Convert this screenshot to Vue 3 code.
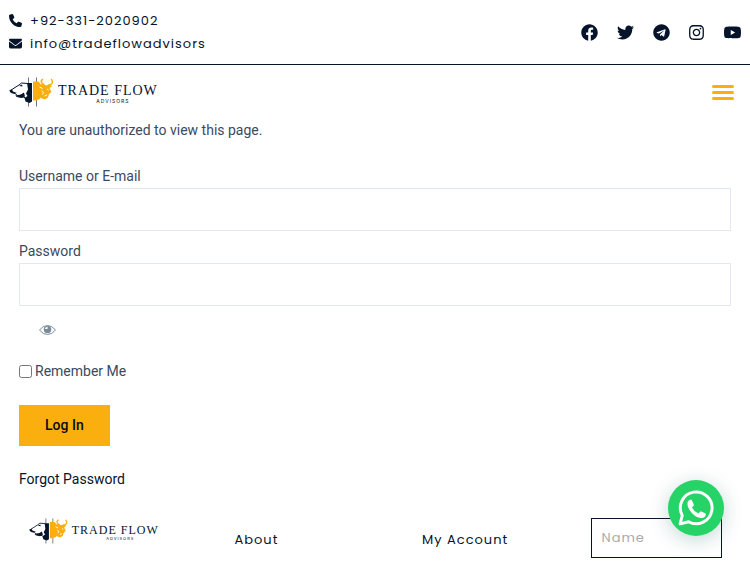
<template>
  <div class="page">
    <!-- shared logo drawing -->
    <svg class="sprite" aria-hidden="true">
      <symbol id="brand-mark" viewBox="0 0 90 60">
        <path d="M39 1v58M55 1v58" stroke="#6a7482" stroke-width="2" />
        <path d="M36 12h10v37l-5 3-8-3-2-7 6-4-3-5 4-8z" fill="#06142b" />
        <path d="M37 13l-12-1-5 4-8 5-9 6 1 4 8 2 5 4 10-1M14 38l5 2 11 0 4 4" fill="none" stroke="#06142b" stroke-width="2" stroke-linejoin="round" />
        <path d="M1 26l5-1 2 4 8 3-6 1-8-3zM20 18l6-3 1 4zM12 37l10-1 8-5 2 8-7 3z" fill="#06142b" />
        <path d="M48 9h11l4 5v29l-8 4h-7z" fill="#fbaf0f" />
        <path d="M62 15l6-1 6 3 6-2 6 3-5 4 4 8-5 4-2 7-6 4-8-3-6-6z" fill="#fbaf0f" />
        <path d="M70 15c-5-2-8-7-3-10M80 16c7-1 9-6 5-11" fill="none" stroke="#fbaf0f" stroke-width="3" stroke-linecap="round" />
        <path d="M61 20l6 3M65 28l4 3-2 4M76 24l3 2M71 38l5-2" fill="none" stroke="#fff" stroke-width="2" />
      </symbol>
    </svg>

    <div class="top-bar">
      <ul class="contact-list">
        <li v-for="item in contacts" :key="item.text">
          <a :href="item.href">
            <svg class="contact-icon" viewBox="0 0 512 512"><path :d="item.icon" /></svg>
            <span>{{ item.text }}</span>
          </a>
        </li>
      </ul>
      <div class="social-list">
        <a v-for="item in socials" :key="item.name" href="#" :aria-label="item.name">
          <svg :viewBox="item.box"><path :d="item.icon" /></svg>
        </a>
      </div>
    </div>

    <header class="site-header">
      <a href="#" class="brand">
        <svg class="brand-mark"><use href="#brand-mark" /></svg>
        <span class="brand-text">
          <span class="brand-name">TRADE FLOW</span>
          <span class="brand-sub">ADVISORS</span>
        </span>
      </a>
      <button type="button" class="menu-btn" aria-label="Menu" @click="menuOpen = !menuOpen">
        <span></span>
        <span></span>
        <span></span>
      </button>
    </header>

    <main class="content">
      <p class="notice">You are unauthorized to view this page.</p>
      <form class="login-form" @submit.prevent>
        <div class="field">
          <label for="user-login">Username or E-mail</label>
          <input id="user-login" v-model="form.username" type="text" />
        </div>
        <div class="field">
          <label for="user-pass">Password</label>
          <input id="user-pass" v-model="form.password" :type="showPassword ? 'text' : 'password'" />
        </div>
        <button type="button" class="eye-btn" aria-label="Show password" @click="showPassword = !showPassword">
          <svg viewBox="0 0 34 22">
            <path d="M1 11Q8 2 17 2t16 9q-7 9-16 9T1 11z" fill="none" stroke="#7b8f9e" stroke-width="2" />
            <circle cx="17" cy="10" r="7.5" fill="#7b8c99" />
            <path d="M17 4v5h-5q0-4 5-5z" fill="#fff" />
          </svg>
        </button>
        <div class="remember">
          <input id="remember" v-model="form.remember" type="checkbox" />
          <label for="remember">Remember Me</label>
        </div>
        <button type="submit" class="login-btn">Log In</button>
      </form>
      <a href="#" class="forgot">Forgot Password</a>
    </main>

    <footer class="site-footer">
      <a href="#" class="brand brand-small">
        <svg class="brand-mark"><use href="#brand-mark" /></svg>
        <span class="brand-text">
          <span class="brand-name">TRADE FLOW</span>
          <span class="brand-sub">ADVISORS</span>
        </span>
      </a>
      <a href="#" class="footer-link">About</a>
      <a href="#" class="footer-link">My Account</a>
      <div class="footer-form">
        <input v-model="form.name" type="text" placeholder="Name" aria-label="Name" />
      </div>
    </footer>

    <button type="button" class="chat-btn" aria-label="WhatsApp">
      <svg viewBox="0 0 34 34">
        <path d="M2 32l2-8a15 15 0 1 1 6 6z" fill="none" stroke="#fff" stroke-width="2.8" stroke-linejoin="round" />
        <path d="M9.5 10.5l2.2-1.3q1-.4 1.5.6l1.7 4q.3.8-.4 1.4l-1.3 1.3q2 4 6 5.7l1.5-1.6q.6-.6 1.4-.3l3.6 1.7q.9.5.6 1.4-.9 3.3-4.6 3-4.900-.6-8.800-5-4.200-4.800-3.900-8.700 0-1.400.5-2.200z" fill="#fff" />
      </svg>
    </button>
  </div>
</template>

<script setup>
import { reactive, ref } from 'vue';

const menuOpen = ref(false);
const showPassword = ref(false);
const form = reactive({ username: '', password: '', remember: false, name: '' });

const contacts = [
  {
    text: '+92-331-2020902',
    href: 'tel:+923312020902',
    icon: 'M164.900 24.600c-7.700-18.600-28-28.500-47.400-23.200l-88 24C12.100 30.200 0 46 0 64c0 247.400 200.600 448 448 448 18 0 33.800-12.100 38.600-29.500l24-88c5.300-19.400-4.600-39.700-23.200-47.400l-96-40c-16.300-6.800-35.200-2.100-46.300 11.600L304.700 368C234.300 334.700 177.300 277.700 144 207.300L193.300 167c13.700-11.200 18.400-30 11.600-46.300l-40-96z',
  },
  {
    text: 'info@tradeflowadvisors',
    href: 'mailto:info@tradeflowadvisors',
    icon: 'M48 64C21.500 64 0 85.500 0 112c0 15.100 7.100 29.300 19.200 38.400L236.800 313.600c11.400 8.500 27 8.500 38.400 0L492.800 150.400c12.100-9.100 19.200-23.300 19.200-38.400 0-26.500-21.500-48-48-48H48zM0 176v208c0 35.300 28.700 64 64 64h384c35.300 0 64-28.700 64-64V176L294.400 339.200c-22.800 17.100-54 17.100-76.800 0L0 176z',
  },
];

const socials = [
  {
    name: 'Facebook',
    box: '0 0 512 512',
    icon: 'M504 256C504 119 393 8 256 8S8 119 8 256c0 123.780 90.690 226.380 209.250 245V327.690h-63V256h63v-54.640c0-62.150 37-96.480 93.670-96.480 27.140 0 55.520 4.840 55.520 4.840v61h-31.280c-30.800 0-40.410 19.120-40.410 38.730V256h68.780l-11 71.690h-57.780V501C413.310 482.380 504 379.780 504 256z',
  },
  {
    name: 'Twitter',
    box: '0 0 512 512',
    icon: 'M459.370 151.716c.325 4.548.325 9.097.325 13.645 0 138.720-105.583 298.558-298.558 298.558-59.452 0-114.680-17.219-161.137-47.106 8.447.974 16.568 1.299 25.340 1.299 49.055 0 94.213-16.568 130.274-44.832-46.132-.975-84.792-31.188-98.112-72.772 6.498.974 12.995 1.624 19.818 1.624 9.421 0 18.843-1.300 27.614-3.573-48.081-9.747-84.143-51.980-84.143-102.985v-1.299c13.969 7.797 30.214 12.670 47.431 13.319-28.264-18.843-46.781-51.005-46.781-87.391 0-19.492 5.197-37.360 14.294-52.954 51.655 63.675 129.300 105.258 216.365 109.807-1.624-7.797-2.599-15.918-2.599-24.040 0-57.828 46.782-104.934 104.934-104.934 30.213 0 57.502 12.670 76.670 33.137 23.715-4.548 46.456-13.320 66.599-25.340-7.798 24.366-24.366 44.833-46.132 57.827 21.117-2.273 41.584-8.122 60.426-16.243-14.292 20.791-32.161 39.308-52.628 54.253z',
  },
  {
    name: 'Telegram',
    box: '0 0 496 512',
    icon: 'M248 8C111 8 0 119 0 256s111 248 248 248 248-111 248-248S385 8 248 8zm121.800 169.900l-40.700 191.800c-3 13.600-11.100 16.900-22.400 10.500l-62-45.700-29.900 28.800c-3.300 3.300-6.100 6.100-12.500 6.100l4.400-63.100 114.900-103.800c5-4.400-1.100-6.900-7.700-2.500l-142 89.400-61.200-19.100c-13.300-4.200-13.600-13.300 2.800-19.700l239.100-92.200c11.100-4 20.800 2.700 17.200 19.500z',
  },
  {
    name: 'Instagram',
    box: '0 0 448 512',
    icon: 'M224.100 141c-63.600 0-114.900 51.300-114.900 114.900s51.300 114.900 114.900 114.900S339 319.500 339 255.900 287.700 141 224.100 141zm0 189.600c-41.100 0-74.700-33.500-74.700-74.700s33.500-74.700 74.700-74.700 74.700 33.500 74.700 74.700-33.600 74.700-74.700 74.700zm146.400-194.300c0 14.900-12 26.800-26.800 26.800-14.900 0-26.800-12-26.800-26.800s12-26.800 26.800-26.800 26.800 12 26.800 26.800zm76.100 27.200c-1.700-35.900-9.900-67.700-36.200-93.900-26.200-26.200-58-34.400-93.900-36.200-37-2.100-147.900-2.100-184.900 0-35.800 1.700-67.600 9.900-93.900 36.100s-34.400 58-36.200 93.900c-2.100 37-2.100 147.900 0 184.900 1.700 35.900 9.900 67.700 36.200 93.900s58 34.400 93.900 36.200c37 2.100 147.900 2.100 184.900 0 35.900-1.700 67.700-9.900 93.900-36.200 26.200-26.200 34.400-58 36.200-93.900 2.100-37 2.100-147.800 0-184.800zM398.800 388c-7.800 19.600-22.900 34.700-42.600 42.600-29.500 11.700-99.500 9-132.100 9s-102.700 2.600-132.100-9c-19.600-7.800-34.700-22.900-42.600-42.600-11.700-29.500-9-99.500-9-132.100s-2.600-102.700 9-132.100c7.800-19.600 22.900-34.700 42.600-42.600 29.500-11.700 99.500-9 132.100-9s102.700-2.600 132.100 9c19.600 7.800 34.700 22.900 42.600 42.600 11.700 29.500 9 99.500 9 132.100s2.700 102.700-9 132.100z',
  },
  {
    name: 'Youtube',
    box: '14 0 548 512',
    icon: 'M549.655 124.083c-6.281-23.650-24.787-42.276-48.284-48.597C458.781 64 288 64 288 64S117.220 64 74.629 75.486c-23.497 6.322-42.003 24.947-48.284 48.597-11.412 42.867-11.412 132.305-11.412 132.305s0 89.438 11.412 132.305c6.281 23.650 24.787 41.500 48.284 47.821C117.220 448 288 448 288 448s170.780 0 213.371-11.486c23.497-6.321 42.003-24.171 48.284-47.821 11.412-42.867 11.412-132.305 11.412-132.305s0-89.438-11.412-132.305zm-317.510 213.508V175.185l142.739 81.205-142.739 81.201z',
  },
];
</script>

<style>
body {
  margin: 0;
  background-color: #ffffff;
}
</style>

<style scoped>
.page {
  font-family: Roboto, "Liberation Sans", sans-serif;
  font-size: 14px;
  line-height: 24px;
  color: #3a4a5f;
}

.page a {
  color: #06142b;
  text-decoration: none;
}

.sprite {
  position: absolute;
  width: 0;
  height: 0;
}

.top-bar {
  display: flex;
  align-items: center;
  justify-content: space-between;
  padding: 9px;
  border-bottom: 1px solid #06142b;
}

.contact-list {
  list-style: none;
  margin: 0;
  padding: 0;
}

.contact-list a {
  display: flex;
  align-items: center;
  gap: 8px;
  font-family: Poppins, Inter, sans-serif;
  font-size: 13px;
  line-height: 23px;
  letter-spacing: 1px;
}

.contact-icon {
  width: 13px;
  height: 13px;
  fill: #06142b;
}

.social-list {
  display: flex;
  justify-content: space-between;
  width: 160px;
}

.social-list svg {
  display: block;
  width: 17px;
  height: 17px;
  fill: #06142b;
}

.site-header {
  display: flex;
  align-items: center;
  justify-content: space-between;
  padding: 12px 16px 0 9px;
}

.brand {
  display: flex;
  align-items: center;
  gap: 4px;
}

.brand-mark {
  width: 45px;
  height: 30px;
}

.brand-text {
  display: flex;
  flex-direction: column;
  align-items: center;
  padding-top: 3px;
  white-space: nowrap;
}

.brand-name {
  font-family: "Liberation Serif", serif;
  font-size: 14px;
  line-height: 14px;
  letter-spacing: 1px;
}

.brand-sub {
  padding-left: 10px;
  font-family: Inter, sans-serif;
  font-size: 5px;
  line-height: 6px;
  letter-spacing: 1px;
}

.menu-btn {
  display: flex;
  flex-direction: column;
  gap: 3px;
  padding: 0;
  border: none;
  background: none;
  cursor: pointer;
}

.menu-btn span {
  width: 22px;
  height: 3px;
  border-radius: 2px;
  background-color: #fbaf0f;
}

.content {
  padding: 11px 19px 0;
}

.notice {
  margin: 0 0 22px;
}

.field {
  margin-bottom: 8px;
}

.field label {
  display: block;
}

.field input {
  display: block;
  box-sizing: border-box;
  width: 100%;
  height: 43px;
  padding: 0 12px;
  border: 1px solid #e2e8f0;
  font: inherit;
  outline: none;
}

.eye-btn {
  display: block;
  margin: 18px 0 0 20px;
  padding: 0;
  border: none;
  background: none;
  cursor: pointer;
}

.eye-btn svg {
  display: block;
  width: 17px;
  height: 12px;
}

.remember {
  display: flex;
  align-items: center;
  gap: 3px;
  margin-top: 23px;
}

.remember input {
  width: 13px;
  height: 13px;
  margin: 0;
}

.login-btn {
  margin-top: 22px;
  padding: 0 26px;
  border: none;
  background-color: #fbaf0f;
  color: #0a0a0a;
  font-family: inherit;
  font-size: 14px;
  font-weight: 500;
  line-height: 41px;
  cursor: pointer;
}

.forgot {
  display: block;
  margin-top: 21px;
}

.site-footer {
  display: grid;
  grid-template-columns: repeat(4, 1fr);
  padding-top: 27px;
}

.brand-small {
  align-self: start;
  justify-self: center;
}

.brand-small .brand-mark {
  width: 39px;
  height: 26px;
}

.brand-small .brand-name {
  font-size: 12px;
  line-height: 12px;
}

.brand-small .brand-sub {
  font-size: 4px;
}

.footer-link {
  align-self: center;
  padding: 4px 0 0 47px;
  font-family: Poppins, Inter, sans-serif;
  font-size: 13px;
  letter-spacing: 1px;
}

.footer-form {
  padding: 0 28px;
}

.footer-form input {
  display: block;
  box-sizing: border-box;
  width: 100%;
  height: 40px;
  padding: 0 10px;
  border: 1px solid #06142b;
  font-family: Poppins, Inter, sans-serif;
  font-size: 13px;
  letter-spacing: 1px;
  outline: none;
}

.footer-form input::placeholder {
  color: #aaaaaa;
}

.chat-btn {
  position: fixed;
  right: 26px;
  bottom: 27px;
  display: flex;
  align-items: center;
  justify-content: center;
  width: 56px;
  height: 56px;
  padding: 0;
  border: none;
  border-radius: 50%;
  background-color: #25d366;
  box-shadow: 0 4px 20px rgba(7, 94, 84, 0.24);
  cursor: pointer;
}

.chat-btn svg {
  width: 36px;
  height: 36px;
}
</style>
